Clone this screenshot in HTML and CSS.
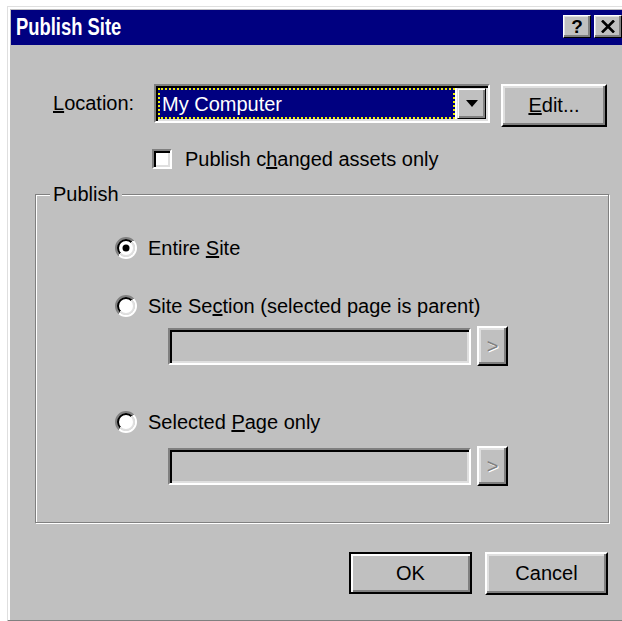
FILE: index.html
```html
<!DOCTYPE html>
<html>
<head>
<meta charset="utf-8">
<title>Publish Site</title>
<link rel="stylesheet" href="styles.css">
</head>
<body>
<div class="window">
  <div class="titlebar">
    <span class="title">Publish Site</span>
    <div class="caption-buttons">
      <span class="cap-btn help">?</span>
      <span class="cap-btn close">
        <svg width="14" height="13" viewBox="0 0 14 13"><path d="M1 0.5 L13 12.5 M13 0.5 L1 12.5" stroke="#000" stroke-width="2.6" fill="none"/></svg>
      </span>
    </div>
  </div>

  <div class="content">
    <div class="location-row">
      <label class="location-label"><u>L</u>ocation:</label>
      <div class="combo">
        <div class="combo-value"><span>My Computer</span></div>
        <div class="combo-arrow">
          <svg width="12" height="7" viewBox="0 0 12 7"><path d="M0 0 H12 L6 7 Z" fill="#000"/></svg>
        </div>
      </div>
      <button class="btn edit-btn"><u>E</u>dit...</button>
    </div>

    <div class="check-row">
      <span class="checkbox"></span>
      <span>Publish c<u>h</u>anged assets only</span>
    </div>

    <fieldset class="group">
      <legend>Publish</legend>
      <div class="radio-row first">
        <svg class="radio" width="22" height="22" viewBox="0 0 22 22">
          <defs>
            <linearGradient id="rOuter" x1="0" y1="0" x2="1" y2="1">
              <stop offset="0.5" stop-color="#808080"/><stop offset="0.5" stop-color="#ffffff"/>
            </linearGradient>
            <linearGradient id="rInner" x1="0" y1="0" x2="1" y2="1">
              <stop offset="0.5" stop-color="#000000"/><stop offset="0.5" stop-color="#dfdfdf"/>
            </linearGradient>
          </defs>
          <circle cx="11" cy="11" r="10" fill="none" stroke="url(#rOuter)" stroke-width="2"/>
          <circle cx="11" cy="11" r="8" fill="#fff" stroke="url(#rInner)" stroke-width="2"/>
          <circle cx="11" cy="11" r="3.5" fill="#000"/>
        </svg>
        <span>Entire <u>S</u>ite</span>
      </div>

      <div class="radio-row second">
        <svg class="radio" width="22" height="22" viewBox="0 0 22 22">
          <circle cx="11" cy="11" r="10" fill="none" stroke="url(#rOuter)" stroke-width="2"/>
          <circle cx="11" cy="11" r="8" fill="#fff" stroke="url(#rInner)" stroke-width="2"/>
        </svg>
        <span>Site Se<u>c</u>tion (selected page is parent)</span>
      </div>
      <div class="picker-row first-picker">
        <div class="field"></div>
        <span class="btn small-btn">&gt;</span>
      </div>

      <div class="radio-row third">
        <svg class="radio" width="22" height="22" viewBox="0 0 22 22">
          <circle cx="11" cy="11" r="10" fill="none" stroke="url(#rOuter)" stroke-width="2"/>
          <circle cx="11" cy="11" r="8" fill="#fff" stroke="url(#rInner)" stroke-width="2"/>
        </svg>
        <span>Selected <u>P</u>age only</span>
      </div>
      <div class="picker-row second-picker">
        <div class="field"></div>
        <span class="btn small-btn">&gt;</span>
      </div>
    </fieldset>

    <div class="button-row">
      <button class="btn default-btn">OK</button>
      <button class="btn">Cancel</button>
    </div>
  </div>
</div>
</body>
</html>
```

FILE: styles.css
```css
html, body {
  margin: 0;
  padding: 0;
  background: #ffffff;
  overflow: hidden;
  height: 621px;
}

body {
  font-family: "Liberation Sans", Arial, sans-serif;
  font-size: 20px;
  color: #000;
}

/* dialog frame */
.window {
  margin: 6px 0 0 7px;
  width: 640px;
  height: 611px;
  background: #c0c0c0;
  border-top: 1px solid #dfdfdf;
  border-left: 1px solid #dfdfdf;
  border-bottom: 2px solid #808080;
  padding: 2px 0 0 3px;
  box-shadow: inset 2px 2px 0 #ffffff;
  box-sizing: content-box;
}

.titlebar {
  height: 35px;
  background: #000080;
  display: flex;
  align-items: center;
  justify-content: space-between;
  width: 611px;
  padding-left: 5px;
  box-sizing: border-box;
  margin-top: 1px;
}

.title {
  font-family: "Liberation Sans", Arial, sans-serif;
  font-weight: bold;
  font-size: 23px;
  color: #ffffff;
  display: inline-block;
  transform: scaleX(0.8);
  transform-origin: left center;
}

.caption-buttons {
  display: flex;
  gap: 3px;
  align-self: flex-start;
  margin-top: 5px;
}

.cap-btn {
  width: 28px;
  height: 23px;
  box-sizing: border-box;
  background: #c0c0c0;
  border: 1px solid;
  border-color: #fff #000 #000 #fff;
  box-shadow: inset -2px -2px 0 #808080, inset 1px 1px 0 #dfdfdf;
  display: flex;
  align-items: center;
  justify-content: center;
  font-weight: bold;
  font-size: 19px;
  line-height: 1;
}

/* dialog body */
.content {
  width: 599px;
  display: flex;
  flex-direction: column;
}

.location-row {
  display: flex;
  align-items: flex-start;
  margin-top: 39px;
  padding-left: 42px;
}

.location-label {
  width: 101px;
  line-height: 39px;
}

.combo {
  width: 336px;
  height: 39px;
  box-sizing: border-box;
  background: #fff;
  border: 2px solid;
  border-color: #808080 #fff #fff #808080;
  box-shadow: inset 2px 2px 0 #000, inset -2px -2px 0 #dfdfdf;
  display: flex;
  padding: 2px;
}

.combo-value {
  flex: 1;
  background: #000080;
  color: #fff;
  margin: 0 2px 0 0;
  border: 2px dotted #f0f000;
  display: flex;
  align-items: center;
  padding-left: 2px;
  line-height: 1;
}

.combo-arrow {
  width: 29px;
  box-sizing: border-box;
  background: #c0c0c0;
  border: 1px solid;
  border-color: #dfdfdf #000 #000 #dfdfdf;
  box-shadow: inset 1px 1px 0 #fff, inset -2px -2px 0 #808080;
  display: flex;
  align-items: center;
  justify-content: center;
}

.btn {
  font-family: "Liberation Sans", Arial, sans-serif;
  font-size: 20px;
  color: #000;
  background: #c0c0c0;
  box-sizing: border-box;
  border: 2px solid;
  border-color: #fff #000 #000 #fff;
  box-shadow: inset -2px -2px 0 #808080, inset 2px 2px 0 #dfdfdf;
  width: 123px;
  height: 43px;
  padding: 0;
  display: flex;
  align-items: center;
  justify-content: center;
}

.edit-btn {
  width: 106px;
  margin-left: 11px;
}

.check-row {
  display: flex;
  align-items: center;
  gap: 13px;
  margin-top: 22px;
  padding-left: 141px;
  height: 20px;
}

.checkbox {
  width: 20px;
  height: 20px;
  box-sizing: border-box;
  background: #fff;
  border: 2px solid;
  border-color: #808080 #fff #fff #808080;
  box-shadow: inset 2px 2px 0 #000, inset -2px -2px 0 #dfdfdf;
}

/* "Publish" group box */
.group {
  margin: 14px 0 0 24px;
  padding: 0;
  width: 574px;
  height: 340px;
  box-sizing: border-box;
  border: 1px solid #808080;
  box-shadow: 1px 1px 0 #fff, inset 1px 1px 0 #fff;
  display: flex;
  flex-direction: column;
  min-width: 0;
}

.group legend {
  margin-left: 14px;
  padding: 0 3px;
  background: #c0c0c0;
  line-height: 22px;
}

.radio-row {
  display: flex;
  align-items: center;
  gap: 11px;
  height: 24px;
  padding-left: 79px;
}

.radio-row.first { margin-top: 31px; }
.radio-row.second { margin-top: 34px; }
.radio-row.third { margin-top: 44px; }

.picker-row {
  display: flex;
  align-items: center;
  gap: 6px;
  padding-left: 132px;
  height: 40px;
}

.first-picker { margin-top: 8px; }
.second-picker { margin-top: 12px; }

.field {
  width: 303px;
  height: 37px;
  box-sizing: border-box;
  background: #c0c0c0;
  border: 2px solid;
  border-color: #808080 #fff #fff #808080;
  box-shadow: inset 2px 2px 0 #000, inset -2px -2px 0 #dfdfdf;
}

.small-btn {
  width: 31px;
  height: 40px;
  color: #808080;
  text-shadow: 1px 1px 0 #fff;
  font-size: 20px;
}

.button-row {
  display: flex;
  justify-content: flex-end;
  gap: 13px;
  margin-top: 29px;
  padding-right: 2px;
}

.default-btn {
  border: 2px solid #000;
  box-shadow: inset 2px 2px 0 #fff, inset -2px -2px 0 #808080;
  height: 42px;
}
```
